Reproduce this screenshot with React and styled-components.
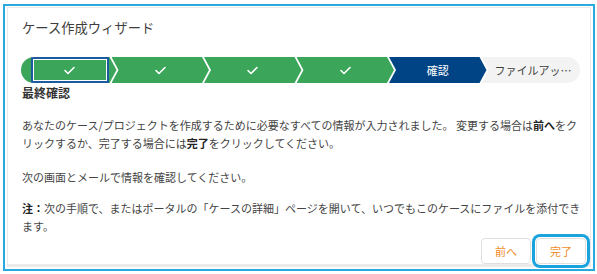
import React from 'react'
import styled, { createGlobalStyle } from 'styled-components'

const GlobalStyle = createGlobalStyle`
  html, body {
    margin: 0;
    padding: 0;
    background: #ffffff;
    font-family: "Noto Sans CJK JP", "Noto Sans", sans-serif;
  }
`

const steps = [
  { state: 'done', focused: true },
  { state: 'done' },
  { state: 'done' },
  { state: 'done' },
  { state: 'current', label: '確認' },
  { state: 'todo', label: 'ファイルアップロード' },
]

const Frame = styled.div`
  box-sizing: border-box;
  height: 267px;
  margin: 4px 2px 3px 3px;
  border: 2px solid #2aa9df;
  display: flex;
  flex-direction: column;
`

const Panel = styled.div`
  flex: 1;
  margin: 1px 2px 2px 2px;
  border: 1px solid #e9e9e9;
  border-bottom: 3px solid #ebebeb;
  padding: 10px 5px 0 14px;
  display: flex;
  flex-direction: column;
  color: #3e3e3c;
`

const Title = styled.h2`
  margin: 0;
  font-size: 13.3px;
  line-height: 20px;
  font-weight: 400;
  color: #3e3e3c;
`

const Path = styled.div`
  display: flex;
  height: 26px;
  margin: 19px 0 0 -1px;
  width: 559px;
  border-radius: 13px;
  overflow: hidden;
`

const colors = {
  done: '#3ba55a',
  current: '#014486',
  todo: '#f3f3f3',
}

const Step = styled.div`
  flex: 1;
  min-width: 0;
  margin-left: ${p => (p.$first ? '0' : '-5px')};
  background: ${p => colors[p.$state]};
  color: ${p => (p.$state === 'todo' ? '#3e3e3c' : '#ffffff')};
  clip-path: ${p =>
    p.$first
      ? 'polygon(0 0, calc(100% - 7px) 0, 100% 50%, calc(100% - 7px) 100%, 0 100%)'
      : p.$last
      ? 'polygon(0 0, 100% 0, 100% 100%, 0 100%, 7px 50%)'
      : 'polygon(0 0, calc(100% - 7px) 0, 100% 50%, calc(100% - 7px) 100%, 0 100%, 7px 50%)'};
  display: flex;
  align-items: center;
  justify-content: center;
  padding: ${p => (p.$first ? '0 8px 0 10px' : p.$last ? '0 8px 0 13px' : '0 10px')};
  box-sizing: border-box;
  font-size: 11px;
  line-height: 26px;
`

const Focus = styled.div`
  flex: 1;
  align-self: stretch;
  display: flex;
  align-items: center;
  justify-content: center;
  box-shadow: inset 0 0 0 2px #1d5aa0, inset 0 0 0 3px #ffffff;
`

const Label = styled.span`
  display: block;
  overflow: hidden;
  white-space: nowrap;
  text-overflow: ellipsis;
  width: 100%;
  text-align: ${p => (p.$left ? 'left' : 'center')};
`

const Heading = styled.h3`
  margin: 3px 0 0;
  font-size: 12px;
  line-height: 14px;
  font-weight: 700;
  color: #333333;
`

const Body = styled.div`
  margin-top: 16px;
  font-size: 11px;
  line-height: 18px;
  color: #444444;
`

const Para = styled.p`
  margin: 0 0 ${p => p.$gap || 0}px;
  b {
    color: #222222;
    font-weight: 700;
  }
`

const Footer = styled.div`
  margin-top: auto;
  margin-right: -1px;
  display: flex;
  justify-content: flex-end;
  gap: 5px;
`

const Button = styled.button`
  width: 50px;
  height: 26px;
  border: 1px solid #e0dfde;
  background: #ffffff;
  color: #f08c28;
  font-family: inherit;
  font-size: 11px;
  padding: 0;
  box-shadow: ${p => (p.$focused ? '0 0 0 1px #ffffff, 0 0 0 4px #1aa3dc' : 'none')};
  border-radius: 4px;
`

const Check = () => (
  <svg width="11" height="9" viewBox="0 0 11 9">
    <polyline points="1,4.5 4,7.5 10,1.5" fill="none" stroke="#ffffff" strokeWidth="1.6" strokeLinecap="round" strokeLinejoin="round" />
  </svg>
)

function App() {
  return (
    <>
      <GlobalStyle />
      <Frame>
        <Panel>
          <Title>ケース作成ウィザード</Title>
          <Path>
            {steps.map((s, i) => (
              <Step key={i} $state={s.state} $first={i === 0} $last={i === steps.length - 1}>
                {s.state === 'done' && s.focused && (
                  <Focus>
                    <Check />
                  </Focus>
                )}
                {s.state === 'done' && !s.focused && <Check />}
                {s.label && <Label $left={s.state === 'todo'}>{s.label}</Label>}
              </Step>
            ))}
          </Path>
          <Heading>最終確認</Heading>
          <Body>
            <Para $gap={16}>
              あなたのケース/プロジェクトを作成するために必要なすべての情報が入力されました。 変更する場合は<b>前へ</b>をクリックするか、完了する場合には<b>完了</b>をクリックしてください。
            </Para>
            <Para $gap={13}>次の画面とメールで情報を確認してください。</Para>
            <Para>
              <b>注：</b>次の手順で、またはポータルの「ケースの詳細」ページを開いて、いつでもこのケースにファイルを添付できます。
            </Para>
          </Body>
          <Footer>
            <Button>前へ</Button>
            <Button $focused>完了</Button>
          </Footer>
        </Panel>
      </Frame>
    </>
  )
}

export default App
